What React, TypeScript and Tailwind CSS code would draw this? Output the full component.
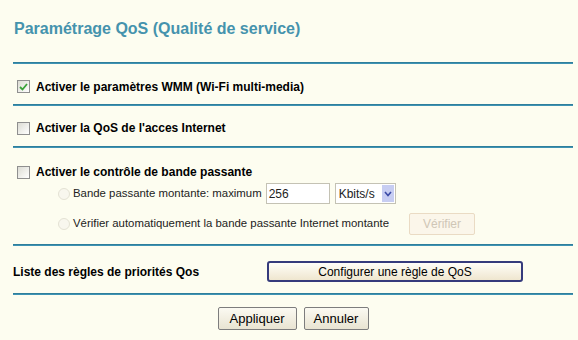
import React from 'react';

const Line = () => <div className="h-[2px] w-full bg-[#3f93b3] border-t border-[#2f7f9c]" />;

const Check = ({ checked }: { checked?: boolean }) => (
  <span className="relative inline-flex h-[13px] w-[13px] shrink-0 items-center justify-center border border-[#8f8f8f] bg-gradient-to-br from-[#dcdcd4] to-[#ffffff]">
    {checked && (
      <svg width="9" height="8" viewBox="0 0 9 8">
        <path d="M1 4 L3.5 6.5 L8 1" fill="none" stroke="#3aa23a" strokeWidth="1.8" />
      </svg>
    )}
  </span>
);

const Radio = () => (
  <span className="inline-block h-[12px] w-[12px] shrink-0 rounded-full border border-[#e4e2d4] bg-[#f8f7ee]" />
);

export default function App() {
  return (
    <div className="w-[578px] h-[340px] bg-[#fdfdf0] pl-[13px] pr-[5px] font-['Liberation_Sans',Arial,sans-serif] text-black">
      <h1 className="pt-[20px] pl-[1px] text-[16px] leading-[18px] font-bold text-[#4593ad]">
        Paramétrage QoS (Qualité de service)
      </h1>
      <div className="mt-[24px]">
        <Line />
      </div>

      <div className="flex h-[40px] items-center gap-[6px] pl-[4px] pt-[5px]">
        <Check checked />
        <span className="text-[12px] font-bold">Activer le paramètres WMM (Wi-Fi multi-media)</span>
      </div>
      <Line />

      <div className="flex h-[40px] items-center gap-[6px] pl-[4px] pt-[4px]">
        <Check />
        <span className="text-[12px] font-bold">Activer la QoS de l'acces Internet</span>
      </div>
      <Line />

      <div className="flex h-[96px] flex-col pl-[4px]">
        <div className="mt-[15px] flex items-center gap-[6px]">
          <Check />
          <span className="text-[12px] font-bold">Activer le contrôle de bande passante</span>
        </div>
        <div className="mt-[2px] flex items-center pl-[41px] text-[11.4px] text-[#222]">
          <Radio />
          <span className="ml-[3px]">Bande passante montante: maximum</span>
          <span className="ml-[4px] flex h-[21px] w-[64px] items-center border border-[#c4c2b4] bg-white px-[2px] text-[12px]">256</span>
          <span className="ml-[5px] flex h-[21px] w-[61px] items-center justify-between border border-[#c4c2b4] bg-white pl-[3px] pr-[1px] text-[12px]">
            Kbits/s
            <span className="flex h-[17px] w-[12px] items-center justify-center bg-[#c7cdf2]">
              <svg width="8" height="6" viewBox="0 0 8 6">
                <path d="M1 1 L4 4.5 L7 1" fill="none" stroke="#3b4aa6" strokeWidth="1.6" />
              </svg>
            </span>
          </span>
        </div>
        <div className="mt-[9px] flex items-center pl-[41px] text-[11.4px] text-[#222]">
          <Radio />
          <span className="ml-[3px]">Vérifier automatiquement la bande passante Internet montante</span>
          <span className="ml-[20px] flex h-[22px] w-[66px] items-center justify-center rounded-[2px] border border-[#eadbc4] bg-[#fbf6ea] text-[12px] text-[#cfc6b6]">
            Vérifier
          </span>
        </div>
      </div>
      <Line />

      <div className="flex h-[47px] items-center pt-[4px]">
        <span className="w-[254px] text-[12px] font-bold">Liste des règles de priorités Qos</span>
        <button className="flex h-[21px] w-[256px] items-center justify-center rounded-[3px] border-2 border-[#353b7c] bg-gradient-to-b from-[#fffef8] to-[#efe6cf] text-[12px] leading-none">
          Configurer une règle de QoS
        </button>
      </div>
      <Line />

      <div className="mt-[12px] flex justify-center gap-[7px]">
        <button className="h-[23px] w-[79px] rounded-[2px] border border-[#7d7d7d] bg-gradient-to-b from-[#fbfaf2] to-[#e9e4d2] text-[13px] leading-none">
          Appliquer
        </button>
        <button className="h-[23px] w-[65px] rounded-[2px] border border-[#7d7d7d] bg-gradient-to-b from-[#fbfaf2] to-[#e9e4d2] text-[13px] leading-none">
          Annuler
        </button>
      </div>
    </div>
  );
}
